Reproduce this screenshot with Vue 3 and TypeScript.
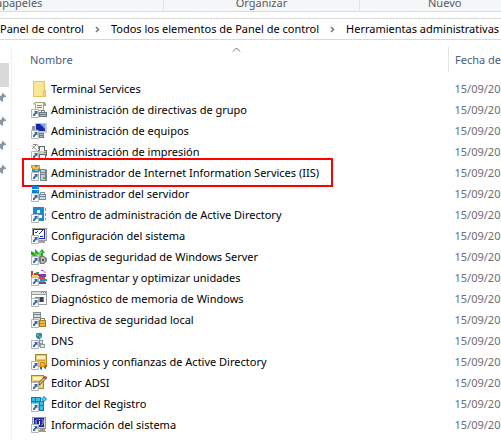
<script setup lang="ts">
interface Shape {
  d: string
  fill?: string
  stroke?: string
  width?: number
}

interface Item {
  name: string
  icon: Shape[]
  shortcut: boolean
  marked?: boolean
}

const f = (fill: string, d: string): Shape => ({ d, fill })
const s = (stroke: string, d: string, width = 1): Shape => ({ d, stroke, width })

const ribbon = ['apapeles', 'Organizar', 'Nuevo']
const crumbs = ['Panel de control', 'Todos los elementos de Panel de control', 'Herramientas administrativas']
const date = '15/09/20'

const items: Item[] = [
  {
    name: 'Terminal Services',
    shortcut: false,
    icon: [
      f('#e8c55c', 'M2 0H14V9H15V16H2Z'),
      f('#fde596', 'M3 1H13V15H3Z'),
      f('#f6d675', 'M12 10H14V15H12Z'),
      s('#e0bf5c', 'M12.5 10V15'),
    ],
  },
  {
    name: 'Administración de directivas de grupo',
    shortcut: true,
    icon: [
      f('#a9a38c', 'M4 0H14L15 2V4H13V9H2V7H4V3L2 2Z'),
      f('#f7f4e4', 'M4 1H12V8H5V3Z'),
      s('#8d8c86', 'M6 3.5H11M6 5.5H11'),
      f('#6b777e', 'M8 10H16V15H8Z'),
      f('#b5c3ca', 'M9 11H15V12H9ZM9 13H15V14H9Z'),
      s('#6b777e', 'M10.5 10V8.5H13.5V10'),
    ],
  },
  {
    name: 'Administración de equipos',
    shortcut: true,
    icon: [
      f('#8c949c', 'M1 3H5V7H1Z'),
      f('#c4c9cf', 'M4 0H16V10H7L4 7Z'),
      f('#1925a8', 'M5 1H14V8H7L5 6Z'),
      f('#7c9df0', 'M9 1H14V6Z'),
      f('#707a82', 'M8 10H13V15H8Z'),
      f('#b3bdc4', 'M9 11H12V12H9ZM9 13H12V14H9Z'),
    ],
  },
  {
    name: 'Administración de impresión',
    shortcut: true,
    icon: [
      s('#8a8780', 'M1 1.5L6 6.5M5.5 0.5L1 5M2 0.5H6L7.5 2.5V5'),
      f('#6a6a6a', 'M8 2H14V6H16V12H7V6H8Z'),
      f('#f4f4f4', 'M9 3H13V7H9Z'),
      f('#c7cbc9', 'M8 7H15V10H8Z'),
      f('#eef2f1', 'M9 11H14V14H9Z'),
      s('#6e706e', 'M8.5 11V14.5H14.5V11'),
      f('#51ad45', 'M13 8H15V9H13Z'),
    ],
  },
  {
    name: 'Administrador de Internet Information Services (IIS)',
    shortcut: true,
    marked: true,
    icon: [
      f('#318dc3', 'M2 0H7L9 2V6L7 8H2L1 6V2Z'),
      f('#7dc3e6', 'M4 4H7V6H4Z'),
      f('#d99e24', 'M0 0H4L5 2L8 0H9V3L6 5H3L0 3Z'),
      f('#f8cf5c', 'M1 1H3L5 3L8 1V3L5 4L2 3Z'),
      f('#76848c', 'M9 4H15L16 5V16H9Z'),
      f('#c7d1d4', 'M10 5H14V15H10Z'),
      s('#77858c', 'M10 7.5H14M10 9.5H14'),
      f('#44b83e', 'M12 12H14V14H12Z'),
    ],
  },
  {
    name: 'Administrador del servidor',
    shortcut: true,
    icon: [
      f('#0883ce', 'M1 0H8V3H1ZM1 4H8V8H1Z'),
      f('#66b8e6', 'M6 1H7V2H6ZM6 5H7V6H6Z'),
      f('#738f9f', 'M8 8H15V14H8Z'),
      f('#c6dae4', 'M9 9H14V10H9ZM9 11H14V13H9Z'),
      s('#738f9f', 'M9.5 8.5V6.5H13.5V8.5'),
    ],
  },
  {
    name: 'Centro de administración de Active Directory',
    shortcut: true,
    icon: [
      f('#148bd2', 'M2 0H13V14H2Z'),
      f('#ffffff', 'M6 3H9V6H6ZM8 8H11V11H8Z'),
      f('#4baee6', 'M14 1H15V4H14ZM14 6H15V9H14ZM14 11H15V13H14Z'),
    ],
  },
  {
    name: 'Configuración del sistema',
    shortcut: true,
    icon: [
      f('#9b9b99', 'M1 0H16V13H1Z'),
      f('#e0e0dc', 'M2 1H15V12H2Z'),
      f('#1829bb', 'M2 1H14V11H2Z'),
      f('#ffffff', 'M3 2H13V10H3Z'),
      s('#1829bb', 'M4 4L5 5L7 3M8 6L12 2M9 8.5H12'),
      f('#a5a5a2', 'M8 13H14V15H8Z'),
    ],
  },
  {
    name: 'Copias de seguridad de Windows Server',
    shortcut: true,
    icon: [
      f('#25a52b', 'M0 2L4 4V0L8 4L11 0L14 4H12V9H8V5L5 8L0 6Z'),
      f('#65dc56', 'M3 4L7 5L10 2L12 4H10V9H8V5L5 7Z'),
      f('#777b77', 'M9 7H13L16 9V12L13 15H9L8 12V9Z'),
      f('#b8c0b8', 'M10 8H13L14 10V12L12 14H10Z'),
      f('#4f524d', 'M11 10H13V12H11Z'),
      f('#d67469', 'M13 8L15 9V11Z'),
    ],
  },
  {
    name: 'Desfragmentar y optimizar unidades',
    shortcut: true,
    icon: [
      f('#d63631', 'M0 1H2V7H0ZM3 3H8V6H3Z'),
      f('#eedf67', 'M1 5H7V7H1Z'),
      f('#2dac56', 'M5 2H8V4H5Z'),
      f('#783fa4', 'M8 4H15V7H8Z'),
      s('#b62fca', 'M10 0.5H12L14.5 3'),
      f('#e4413c', 'M8 7H14V9H8Z'),
      f('#00a5b3', 'M9 9H16V11H9Z'),
      f('#51b947', 'M8 11H14V12H8Z'),
      f('#833fa1', 'M8 12H15V14H8Z'),
    ],
  },
  {
    name: 'Diagnóstico de memoria de Windows',
    shortcut: true,
    icon: [
      f('#9a9fa3', 'M0 0H16V14H0Z'),
      f('#dce2e7', 'M1 1H15V3H1Z'),
      f('#ffffff', 'M1 4H15V13H1Z'),
      f('#6f7c87', 'M10 1H11V2H10ZM12 1H13V2H12ZM14 1H15V2H14Z'),
      f('#7b8287', 'M4 6H13V11H5V8H4Z'),
      f('#3a4349', 'M9 6H12V11H9Z'),
      s('#aaadb0', 'M7 7.5H9M7 9.5H9'),
    ],
  },
  {
    name: 'Directiva de seguridad local',
    shortcut: true,
    icon: [
      f('#818c90', 'M2 0H10V13H2Z'),
      f('#d8dfe1', 'M3 1H9V12H3Z'),
      s('#738187', 'M3 2.5H9M3 5.5H9'),
      f('#a97a1c', 'M8 8H15V15H8Z'),
      f('#e7b83b', 'M9 9H14V14H9Z'),
      s('#8a7343', 'M9.5 8V6.5H13.5V8'),
      s('#bd8c27', 'M9 11.5H14'),
    ],
  },
  {
    name: 'DNS',
    shortcut: true,
    icon: [
      f('#2a7fba', 'M6 0H10L11 1V4L9 6H7L5 4V1Z'),
      f('#61c263', 'M6 1H8V3H6ZM8 3H10V4L8 5Z'),
      s('#a2adb2', 'M8.5 6V8'),
      f('#8a989f', 'M8 7H12V14H8ZM9 11H14V15H9Z'),
      f('#e3eaec', 'M9 8H11V10H9ZM10 12H13V14H10Z'),
    ],
  },
  {
    name: 'Dominios y confianzas de Active Directory',
    shortcut: true,
    icon: [
      f('#a88327', 'M4 0H16V13H1V7H4Z'),
      f('#edc75f', 'M5 1H15V12H5Z'),
      f('#fff4bf', 'M6 2H14V5H6Z'),
      s('#cca13b', 'M6 6.5H14'),
      f('#1371c4', 'M9 12H11V16L9 15ZM13 11H15V15L13 14Z'),
      f('#db8814', 'M9 8H14V13H9Z'),
      f('#f5b72c', 'M10 9H13V12H10Z'),
    ],
  },
  {
    name: 'Editor ADSI',
    shortcut: true,
    icon: [
      f('#ac852a', 'M0 0H13V14H0Z'),
      f('#f0d078', 'M1 1H12V13H1Z'),
      f('#fff5c5', 'M2 2H11V5H2Z'),
      s('#c79f48', 'M2 6.5H9'),
      f('#5f4628', 'M7 8L14 1L16 3L9 10L7 11Z'),
      f('#f2c76f', 'M8 8L13 3L14 4L9 9Z'),
      f('#cf635e', 'M13 1H15L16 2V4L14 3Z'),
    ],
  },
  {
    name: 'Editor del Registro',
    shortcut: true,
    icon: [
      f('#097fae', 'M0 1H10V5H13V15H4V9H0Z'),
      f('#37bee9', 'M1 2H4V5H1ZM5 2H9V5H5ZM1 6H4V9H1ZM5 6H8V9H5ZM9 6H12V9H9ZM9 10H12V14H9Z'),
      f('#087da9', 'M13 0L16 3L13 6L10 3Z'),
      f('#62cfee', 'M13 1L15 3L13 5L11 3Z'),
    ],
  },
  {
    name: 'Información del sistema',
    shortcut: true,
    icon: [
      f('#97958c', 'M1 0H15V12H1Z'),
      f('#d7d5cb', 'M2 1H14V11H2Z'),
      f('#1c25a2', 'M3 1H13V10H3Z'),
      f('#ffffff', 'M8 2H9V3H8ZM8 4H9V8H8Z'),
      s('#aac5f5', 'M6.5 2L5 3.5V6.5L6.5 8.5M10.5 2L12 3.5V6.5L10.5 8.5'),
      f('#9a9993', 'M9 12H14V14H15V15H8V13H9Z'),
    ],
  },
]
</script>

<template>
  <div class="explorer">
    <div class="ribbon">
      <span v-for="group in ribbon" :key="group" class="group">{{ group }}</span>
    </div>

    <nav class="address">
      <template v-for="(crumb, i) in crumbs" :key="crumb">
        <svg v-if="i > 0" class="chevron" viewBox="0 0 5 7"><path d="M1 1L3.5 3.5L1 6" /></svg>
        <a href="#" class="crumb">{{ crumb }}</a>
      </template>
    </nav>

    <div class="body">
      <aside class="side">
        <div class="selected"></div>
        <svg v-for="n in 4" :key="n" class="pin" viewBox="0 0 7 10">
          <path d="M2 0H3L6 3V4H4L3 6V8L2 9L0 7V3L2 2Z" />
        </svg>
      </aside>

      <main class="files">
        <table>
          <thead>
            <tr>
              <th class="name">
                Nombre
                <svg class="sort" viewBox="0 0 9 5"><path d="M1 4.5L4.5 1L8 4.5" /></svg>
              </th>
              <th class="date">Fecha de</th>
            </tr>
          </thead>
          <tbody>
            <tr v-for="item in items" :key="item.name">
              <td class="name">
                <div class="entry" :class="{ marked: item.marked }">
                  <svg class="icon" viewBox="0 0 16 16" aria-hidden="true">
                    <path
                      v-for="(shape, i) in item.icon"
                      :key="i"
                      :d="shape.d"
                      :fill="shape.fill ?? 'none'"
                      :stroke="shape.stroke ?? 'none'"
                      :stroke-width="shape.width"
                    />
                    <g v-if="item.shortcut">
                      <path d="M0.5 7.5H7.5V15.5H0.5Z" fill="#fafafa" stroke="#b4b4b4" />
                      <path d="M3 9H6.5V12.5L5.3 11.5L3.5 14H2V12.5L4.2 10.3Z" fill="#2f68a8" />
                    </g>
                  </svg>
                  <span>{{ item.name }}</span>
                </div>
              </td>
              <td class="date">{{ date }}</td>
            </tr>
          </tbody>
        </table>
      </main>
    </div>
  </div>
</template>

<style>
body {
  margin: 0;
  background: #fff;
}
</style>

<style scoped>
.explorer {
  height: 100vh;
  display: flex;
  flex-direction: column;
  overflow: hidden;
  background: #fff;
  color: #000;
  font: 11px/20px 'Noto Sans', 'Open Sans', sans-serif;
  white-space: nowrap;
}

.ribbon {
  display: grid;
  grid-template-columns: 164px 196px 1fr;
  flex: none;
  height: 11px;
  overflow: hidden;
  background: #f5f6f7;
  border-bottom: 1px solid #dadbdc;
  color: #5a5a5a;
  line-height: 6px;
}

.group {
  text-align: center;
  border-right: 1px solid #e1e2e3;
}

.group:first-child {
  text-align: left;
  text-indent: -4px;
}

.group:last-child {
  padding-left: 68px;
  text-align: left;
  border-right: 0;
}

.address {
  display: flex;
  flex: none;
  align-items: center;
  height: 20px;
  margin-top: 6px;
  border: solid #d9d9d9;
  border-width: 1px 0;
}

.crumb {
  color: #000;
  text-decoration: none;
}

.chevron {
  flex: none;
  width: 5px;
  height: 7px;
  margin: 0 11px;
}

.chevron path {
  fill: none;
  stroke: #777;
  stroke-width: 1.5;
}

.body {
  display: flex;
  flex: 1;
  min-height: 0;
  padding-top: 7px;
}

.side {
  display: flex;
  flex-direction: column;
  gap: 14px;
  flex: none;
  width: 11px;
  padding-top: 16px;
  border-right: 1px solid #f0f0f0;
}

.selected {
  width: 9px;
  height: 24px;
  margin-bottom: -8px;
  background: #d9d9d9;
}

.pin {
  width: 7px;
  height: 10px;
  fill: #8997a5;
}

.files {
  flex: 1;
  min-width: 0;
  overflow: hidden;
}

table {
  width: 100%;
  table-layout: fixed;
  border-collapse: collapse;
}

th,
td {
  padding: 0;
  font-weight: 400;
  text-align: left;
}

th {
  position: relative;
  height: 25px;
  color: #4c607a;
}

th.name {
  width: 418px;
  padding-left: 18px;
  border-right: 1px solid #e5e5e5;
}

th.date,
td.date {
  padding-left: 6px;
}

td.date {
  color: #6d6d6d;
}

.sort {
  position: absolute;
  top: 0;
  left: 220px;
  width: 9px;
  height: 5px;
}

.sort path {
  fill: none;
  stroke: #6d6d6d;
}

tbody::before {
  content: '';
  display: block;
  height: 6px;
}

td {
  height: 21px;
}

.entry {
  position: relative;
  display: flex;
  align-items: center;
  gap: 4px;
  padding-left: 19px;
  width: max-content;
}

.marked::after {
  content: '';
  position: absolute;
  inset: -5px -14px -4px 10px;
  border: 2px solid #ff0000;
}

.icon {
  flex: none;
  width: 16px;
  height: 16px;
}
</style>
